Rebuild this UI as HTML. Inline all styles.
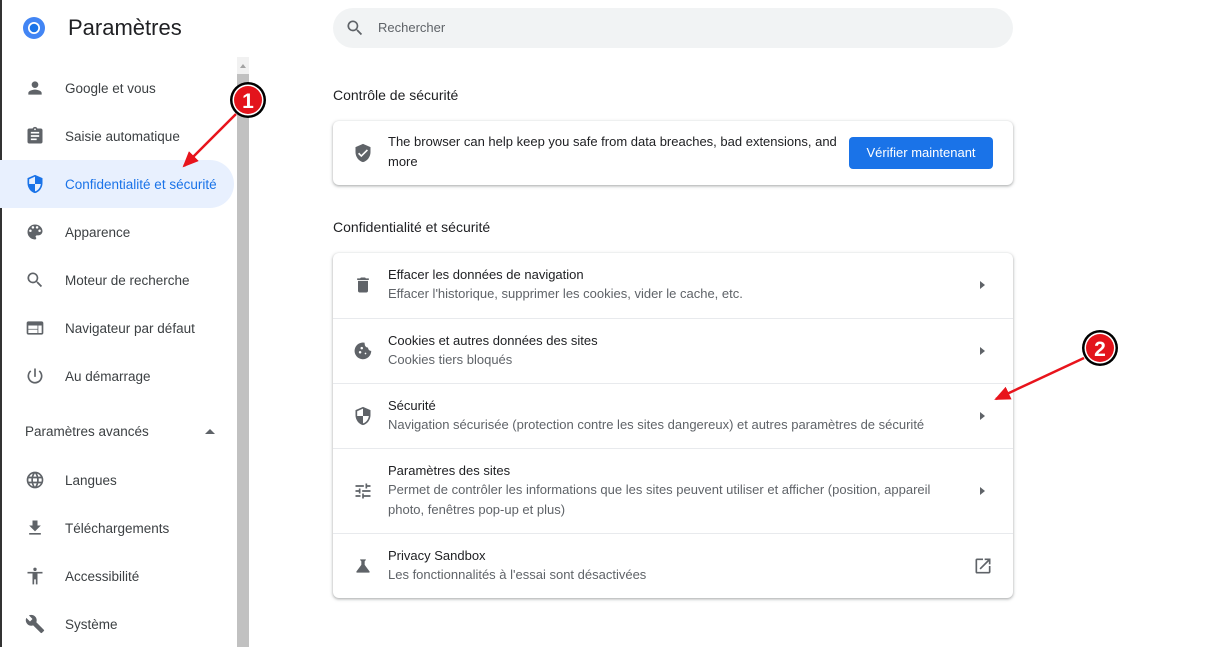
<!DOCTYPE html>
<html><head><meta charset="utf-8"><style>
*{box-sizing:border-box;margin:0;padding:0}
body{width:1229px;height:647px;overflow:hidden;background:#fff;font-family:"Liberation Sans",sans-serif;position:relative;color:#202124}
.abs{position:absolute}
.nav{position:absolute;left:0;height:48px;width:234px;display:flex;align-items:center;font-size:13.5px;color:#3c4043;white-space:nowrap}
.nav svg{position:absolute;left:25px;width:20px;height:20px;fill:#5f6368}
.nav span{position:absolute;left:65px}
.sel{background:#e8f0fe;border-radius:0 24px 24px 0;color:#1a73e8}
.sel svg{fill:#1a73e8}
.card{position:absolute;left:333px;width:680px;background:#fff;border-radius:6px;box-shadow:0 1px 2px rgba(60,64,67,.3),0 1px 3px 1px rgba(60,64,67,.15)}
.row{position:absolute;left:0;width:680px;border-top:1px solid #e8eaed}
.row svg.ic{position:absolute;left:20px;width:20px;height:20px;fill:#5f6368}
.t{position:absolute;left:55px;font-size:13px;color:#202124}
.s{position:absolute;left:55px;font-size:13px;color:#5f6368;line-height:20px}
.car{position:absolute;left:647px;width:0;height:0;border-top:4px solid transparent;border-bottom:4px solid transparent;border-left:5px solid #5f6368}
</style></head><body>
<div class="abs" style="left:0;top:0;width:2px;height:647px;background:#333"></div>
<svg class="abs" style="left:22px;top:16px" width="24" height="24" viewBox="0 0 24 24"><circle cx="12" cy="12" r="11" fill="#4285f4"/><circle cx="12" cy="12" r="6" fill="#fff"/><circle cx="12" cy="12" r="4.3" fill="#1a73e8"/></svg>
<div class="abs" style="left:68px;top:15px;font-size:22px;color:#202124">Paramètres</div>
<div class="abs" style="left:237px;top:57px;width:12px;height:590px;background:#c1c1c1"></div>
<div class="abs" style="left:237px;top:57px;width:12px;height:17px;background:#f1f1f1"></div>
<div class="abs" style="left:240px;top:64px;border-left:3px solid transparent;border-right:3px solid transparent;border-bottom:4px solid #a3a3a3"></div>

<div class="nav" style="top:64px"><svg viewBox="0 0 24 24"><path d="M12 12c2.2 0 4-1.8 4-4s-1.8-4-4-4-4 1.8-4 4 1.8 4 4 4zm0 2c-2.7 0-8 1.3-8 4v2h16v-2c0-2.7-5.3-4-8-4z"/></svg><span>Google et vous</span></div>
<div class="nav" style="top:112px"><svg viewBox="0 0 24 24"><path d="M19 3h-4.2C14.4 1.8 13.3 1 12 1s-2.4.8-2.8 2H5c-1.1 0-2 .9-2 2v14c0 1.1.9 2 2 2h14c1.1 0 2-.9 2-2V5c0-1.1-.9-2-2-2zm-7 0c.6 0 1 .4 1 1s-.4 1-1 1-1-.4-1-1 .4-1 1-1zm2 14H7v-2h7v2zm3-4H7v-2h10v2zm0-4H7V7h10v2z"/></svg><span>Saisie automatique</span></div>
<div class="nav sel" style="top:160px"><svg viewBox="0 0 24 24"><path d="M12 1L3 5v6c0 5.5 3.8 10.7 9 12 5.2-1.3 9-6.5 9-12V5l-9-4zm0 11h7c-.5 4.1-3.3 7.8-7 8.9V12H5V6.3l7-3.1V12z"/></svg><span>Confidentialité et sécurité</span></div>
<div class="nav" style="top:208px"><svg viewBox="0 0 24 24"><path d="M12 3a9 9 0 000 18c.8 0 1.5-.7 1.5-1.5 0-.4-.1-.7-.4-1-.2-.3-.4-.6-.4-1 0-.8.7-1.5 1.5-1.5H16c2.8 0 5-2.2 5-5 0-4.4-4-8-9-8zm-5.5 9a1.5 1.5 0 110-3 1.5 1.5 0 010 3zm3-4a1.5 1.5 0 110-3 1.5 1.5 0 010 3zm5 0a1.5 1.5 0 110-3 1.5 1.5 0 010 3zm3 4a1.5 1.5 0 110-3 1.5 1.5 0 010 3z"/></svg><span>Apparence</span></div>
<div class="nav" style="top:256px"><svg viewBox="0 0 24 24"><path d="M15.5 14h-.8l-.3-.3A6.5 6.5 0 109.5 16c1.6 0 3.1-.6 4.2-1.6l.3.3v.8l5 5 1.5-1.5-5-5zm-6 0a4.5 4.5 0 110-9 4.5 4.5 0 010 9z"/></svg><span>Moteur de recherche</span></div>
<div class="nav" style="top:304px"><svg viewBox="0 0 24 24"><path d="M20 4H4c-1.1 0-2 .9-2 2v12c0 1.1.9 2 2 2h16c1.1 0 2-.9 2-2V6c0-1.1-.9-2-2-2zm-5 14H4v-4h11v4zm0-5H4V9h11v4zm5 5h-4V9h4v9z"/></svg><span>Navigateur par défaut</span></div>
<div class="nav" style="top:352px"><svg viewBox="0 0 24 24"><path d="M13 3h-2v10h2V3zm4.8 2.2l-1.4 1.4A7 7 0 115 12c0-2.2 1-4.1 2.6-5.4L6.2 5.2A9 9 0 1017.8 5.2z"/></svg><span>Au démarrage</span></div>
<div class="abs" style="left:25px;top:424px;font-size:13.5px;color:#3c4043">Paramètres avancés</div>
<div class="abs" style="left:205px;top:429px;border-left:5px solid transparent;border-right:5px solid transparent;border-bottom:5px solid #5f6368"></div>
<div class="nav" style="top:456px"><svg viewBox="0 0 24 24"><path d="M12 2a10 10 0 100 20 10 10 0 000-20zm6.9 6h-3c-.3-1.3-.8-2.5-1.4-3.6A8 8 0 0118.9 8zM12 4c.8 1.2 1.5 2.5 1.9 4h-3.8c.4-1.4 1.1-2.8 1.9-4zM4.3 14a8 8 0 010-4h3.4a16 16 0 000 4H4.3zm.8 2h3c.3 1.3.8 2.5 1.4 3.6A8 8 0 015.1 16zM8 8H5.1a8 8 0 014.3-3.6C8.8 5.5 8.4 6.7 8 8zm4 12c-.8-1.2-1.5-2.5-1.9-4h3.8c-.4 1.4-1.1 2.8-1.9 4zm2.3-6H9.7a15 15 0 010-4h4.6a15 15 0 010 4zm.3 5.6c.6-1.1 1.1-2.3 1.4-3.6h3a8 8 0 01-4.4 3.6zM16.4 14a16 16 0 000-4h3.4a8 8 0 010 4h-3.4z"/></svg><span>Langues</span></div>
<div class="nav" style="top:504px"><svg viewBox="0 0 24 24"><path d="M19 9h-4V3H9v6H5l7 7 7-7zM5 18v2h14v-2H5z"/></svg><span>Téléchargements</span></div>
<div class="nav" style="top:552px"><svg viewBox="0 0 24 24"><path d="M12 2a2 2 0 110 4 2 2 0 010-4zm9 7h-6v13h-2v-6h-2v6H9V9H3V7h18v2z"/></svg><span>Accessibilité</span></div>
<div class="nav" style="top:600px"><svg viewBox="0 0 24 24"><path d="M22.7 19l-9.1-9.1c.9-2.3.4-5-1.5-6.9-2-2-5-2.4-7.4-1.3L9 6 6 9 1.6 4.7C.4 7.1.9 10.1 2.9 12.1c1.9 1.9 4.6 2.4 6.9 1.5l9.1 9.1c.4.4 1 .4 1.4 0l2.3-2.3c.5-.4.5-1.1.1-1.4z"/></svg><span>Système</span></div>

<div class="abs" style="left:333px;top:8px;width:680px;height:40px;border-radius:20px;background:#f1f3f4"></div>
<svg class="abs" style="left:345px;top:18px" width="20" height="20" viewBox="0 0 24 24" fill="#5f6368"><path d="M15.5 14h-.8l-.3-.3A6.5 6.5 0 109.5 16c1.6 0 3.1-.6 4.2-1.6l.3.3v.8l5 5 1.5-1.5-5-5zm-6 0a4.5 4.5 0 110-9 4.5 4.5 0 010 9z"/></svg>
<div class="abs" style="left:378px;top:20px;font-size:13px;color:#5f6368">Rechercher</div>

<div class="abs" style="left:333px;top:87px;font-size:14px;color:#202124">Contrôle de sécurité</div>
<div class="card" style="top:121px;height:64px">
<svg class="abs" style="left:20px;top:22px" width="20" height="20" viewBox="0 0 24 24" fill="#5f6368"><path d="M12 1L3 5v6c0 5.5 3.8 10.7 9 12 5.2-1.3 9-6.5 9-12V5l-9-4zm-2 16l-4-4 1.4-1.4 2.6 2.6 6.6-6.6L18 9l-8 8z"/></svg>
<div class="s" style="top:11px;color:#202124;width:460px">The browser can help keep you safe from data breaches, bad extensions, and more</div>
<div class="abs" style="left:516px;top:16px;width:144px;height:32px;background:#1a73e8;border-radius:4px;color:#fff;font-size:13px;text-align:center;line-height:32px">Vérifier maintenant</div>
</div>

<div class="abs" style="left:333px;top:219px;font-size:14px;color:#202124">Confidentialité et sécurité</div>
<div class="card" style="top:253px;height:345px">
<div class="row" style="top:0;height:65px;border-top:none">
<svg class="ic" style="top:22px" viewBox="0 0 24 24"><path d="M6 19c0 1.1.9 2 2 2h8c1.1 0 2-.9 2-2V7H6v12zM19 4h-3.5l-1-1h-5l-1 1H5v2h14V4z"/></svg>
<div class="t" style="top:14px">Effacer les données de navigation</div><div class="s" style="top:31px">Effacer l'historique, supprimer les cookies, vider le cache, etc.</div><div class="car" style="top:28px"></div></div>
<div class="row" style="top:65px;height:65px">
<svg class="ic" style="top:22px" viewBox="0 0 24 24"><path d="M21.9 11.9A4 4 0 0118 8a4 4 0 01-3.9-4 4 4 0 01-.1-1.9A10 10 0 1021.9 11.9zM8.5 15a1.5 1.5 0 110-3 1.5 1.5 0 010 3zm2-5a1.5 1.5 0 110-3 1.5 1.5 0 010 3zm4.5 6a1 1 0 110-2 1 1 0 010 2z"/></svg>
<div class="t" style="top:14px">Cookies et autres données des sites</div><div class="s" style="top:31px">Cookies tiers bloqués</div><div class="car" style="top:28px"></div></div>
<div class="row" style="top:130px;height:65px">
<svg class="ic" style="top:22px" viewBox="0 0 24 24"><path d="M12 1L3 5v6c0 5.5 3.8 10.7 9 12 5.2-1.3 9-6.5 9-12V5l-9-4zm0 11h7c-.5 4.1-3.3 7.8-7 8.9V12H5V6.3l7-3.1V12z"/></svg>
<div class="t" style="top:14px">Sécurité</div><div class="s" style="top:31px">Navigation sécurisée (protection contre les sites dangereux) et autres paramètres de sécurité</div><div class="car" style="top:28px"></div></div>
<div class="row" style="top:195px;height:85px">
<svg class="ic" style="top:32px" viewBox="0 0 24 24"><path d="M3 17v2h6v-2H3zM3 5v2h10V5H3zm10 16v-2h8v-2h-8v-2h-2v6h2zM7 9v2H3v2h4v2h2V9H7zm14 4v-2H11v2h10zm-6-4h2V7h4V5h-4V3h-2v6z"/></svg>
<div class="t" style="top:14px">Paramètres des sites</div><div class="s" style="top:31px;width:560px">Permet de contrôler les informations que les sites peuvent utiliser et afficher (position, appareil photo, fenêtres pop-up et plus)</div><div class="car" style="top:38px"></div></div>
<div class="row" style="top:280px;height:65px">
<svg class="ic" style="top:22px" viewBox="0 0 24 24"><path d="M19.8 18.4L14 10.7V6.5l1.4-1.7c.3-.3.1-.8-.4-.8H9c-.4 0-.7.5-.4.8L10 6.5v4.2l-5.8 7.7c-.5.7 0 1.6.8 1.6h14c.8 0 1.3-.9.8-1.6z"/></svg>
<div class="t" style="top:14px">Privacy Sandbox</div><div class="s" style="top:31px">Les fonctionnalités à l'essai sont désactivées</div>
<svg class="abs" style="left:640px;top:22px" width="20" height="20" viewBox="0 0 24 24" fill="#5f6368"><path d="M19 19H5V5h7V3H5a2 2 0 00-2 2v14a2 2 0 002 2h14c1.1 0 2-.9 2-2v-7h-2v7zM14 3v2h3.6l-9.8 9.8 1.4 1.4L19 6.4V10h2V3h-7z"/></svg></div>
</div>

<svg class="abs" style="left:0;top:0" width="1229" height="647">
<defs><marker id="ah" markerWidth="16" markerHeight="14" refX="14" refY="7" orient="auto" markerUnits="userSpaceOnUse"><path d="M0 0L16 7L0 14z" fill="#e8141c"/></marker></defs>
<line x1="236" y1="114" x2="184" y2="166" stroke="#e8141c" stroke-width="2.5" marker-end="url(#ah)"/>
<line x1="1084" y1="358" x2="996" y2="399" stroke="#e8141c" stroke-width="2.5" marker-end="url(#ah)"/>
<circle cx="248" cy="100" r="18" fill="#000"/><circle cx="248" cy="100" r="15.5" fill="#fff"/><circle cx="248" cy="100" r="14" fill="#e3141c"/>
<text x="248" y="108" font-family="Liberation Sans" font-weight="bold" font-size="21" fill="#fff" text-anchor="middle">1</text>
<circle cx="1100" cy="348" r="18" fill="#000"/><circle cx="1100" cy="348" r="15.5" fill="#fff"/><circle cx="1100" cy="348" r="14" fill="#e3141c"/>
<text x="1100" y="356" font-family="Liberation Sans" font-weight="bold" font-size="21" fill="#fff" text-anchor="middle">2</text>
</svg>
</body></html>
